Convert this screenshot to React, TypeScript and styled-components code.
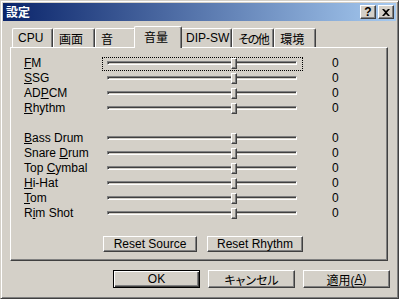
import React from "react";
import styled, { createGlobalStyle } from "styled-components";

const GlobalStyle = createGlobalStyle`
  html, body { margin: 0; padding: 0; background: #d4d0c8; }
  body {
    font-family: "Liberation Sans", "Noto Sans CJK JP", sans-serif;
    font-size: 12px;
    color: #000;
    font-feature-settings: "palt";
  }
  * { box-sizing: border-box; }
`;

const Window = styled.div`
  width: 399px;
  height: 299px;
  background: #d4d0c8;
  border: 1px solid;
  border-color: #d4d0c8 #404040 #404040 #d4d0c8;
  box-shadow: inset 1px 1px #ffffff, inset -1px -1px #808080;
  padding: 2px;
  display: flex;
  flex-direction: column;
`;

const TitleBar = styled.div`
  height: 18px;
  display: flex;
  align-items: center;
  padding: 0 2px 0 2px;
  background: linear-gradient(to right, #0a246a, #a6caf0);
`;

const TitleText = styled.div`
  flex: 1;
  color: #fff;
  font-family: "Noto Sans CJK JP", sans-serif;
  font-weight: bold;
  font-size: 12px;
  line-height: 18px;
  padding-left: 1px;
`;

const TitleButton = styled.div`
  width: 16px;
  height: 14px;
  margin-left: 2px;
  background: #d4d0c8;
  border: 1px solid;
  border-color: #ffffff #404040 #404040 #ffffff;
  box-shadow: inset -1px -1px #808080;
  display: flex;
  align-items: center;
  justify-content: center;
  font-family: "Liberation Sans", sans-serif;
  font-weight: bold;
  font-size: 12px;
  line-height: 12px;
  color: #000;
`;

const Body = styled.div`
  padding: 5px 8px 0 7px;
  display: flex;
  flex-direction: column;
`;

const TabRow = styled.div`
  height: 21px;
  display: flex;
  align-items: flex-end;
  padding-left: 2px;
`;

const Tab = styled.div<{ $active?: boolean; $w: number; $tight?: boolean }>`
  position: relative;
  flex-shrink: 0;
  z-index: ${(p) => (p.$active ? 1 : 0)};
  min-width: ${(p) => p.$w + (p.$active ? 4 : 0)}px;
  height: ${(p) => (p.$active ? 22 : 19)}px;
  margin: 0 ${(p) => (p.$active ? -2 : 0)}px ${(p) => (p.$active ? -1 : 0)}px;
  padding-left: ${(p) => (p.$active ? 9 : 5)}px;
  padding-right: ${(p) => (p.$active ? 5 : 2)}px;
  letter-spacing: ${(p) => (p.$tight ? "-1.5px" : "0")};
  background: #d4d0c8;
  border-left: 1px solid #ffffff;
  border-top: 1px solid #ffffff;
  border-right: 1px solid #404040;
  border-radius: 2px 2px 0 0;
  box-shadow: inset -1px 0 #808080;
  display: flex;
  align-items: center;
  font-family: "Liberation Sans", "Noto Sans CJK JP", sans-serif;
  font-size: 12px;
  white-space: nowrap;
  padding-bottom: ${(p) => (p.$active ? 2 : 0)}px;
`;

const Panel = styled.div`
  width: 378px;
  height: 214px;
  border: 1px solid;
  border-color: #ffffff #404040 #404040 #ffffff;
  box-shadow: inset -1px -1px #808080;
  padding: 8px 0 0 13px;
  display: flex;
  flex-direction: column;
`;

const Row = styled.div`
  height: 15px;
  display: flex;
  align-items: flex-start;
`;

const Label = styled.div`
  width: 78px;
  line-height: 15px;
  white-space: nowrap;
`;

const Key = styled.span`
  text-decoration: underline;
  text-underline-offset: 1px;
`;

const Spacer = styled.div`
  height: 15px;
`;

const SliderBox = styled.div<{ $focused?: boolean }>`
  position: relative;
  width: 201px;
  height: 14px;
  margin-top: 1px;
  outline: ${(p) => (p.$focused ? "1px dotted #000" : "none")};
  outline-offset: -1px;
`;

const Track = styled.div`
  position: absolute;
  left: 5px;
  right: 6px;
  top: 4px;
  height: 4px;
  background: #d4d0c8;
  border: 1px solid;
  border-color: #808080 #ffffff #ffffff #808080;
  box-shadow: inset 1px 1px #404040;
`;

const Thumb = styled.div`
  position: absolute;
  top: 1px;
  width: 6px;
  height: 11px;
  background: #d4d0c8;
  border: 1px solid;
  border-color: #ffffff #404040 #404040 #ffffff;
  box-shadow: inset -1px -1px #808080;
`;

const Value = styled.div`
  margin-left: 29px;
  line-height: 15px;
`;

const ResetRow = styled.div`
  display: flex;
  gap: 10px;
  margin-top: 15px;
  margin-left: 79px;
`;

const Button = styled.div<{ $w: number; $h: number; $default?: boolean }>`
  width: ${(p) => p.$w}px;
  height: ${(p) => p.$h}px;
  background: #d4d0c8;
  display: flex;
  align-items: center;
  justify-content: center;
  font-family: "Liberation Sans", "Noto Sans CJK JP", sans-serif;
  font-size: 12px;
  white-space: nowrap;
  border: 1px solid;
  border-color: ${(p) =>
    p.$default ? "#000000" : "#ffffff #404040 #404040 #ffffff"};
  box-shadow: ${(p) =>
    p.$default
      ? "inset 1px 1px #ffffff, inset -1px -1px #404040, inset -2px -2px #808080"
      : "inset -1px -1px #808080"};
`;

const ButtonRow = styled.div`
  display: flex;
  justify-content: flex-end;
  gap: 8px;
  margin-top: 9px;
  margin-right: -2px;
`;

const MIN = -100;
const MAX = 50;

function Slider({ value, focused }: { value: number; focused?: boolean }) {
  const frac = (value - MIN) / (MAX - MIN);
  const left = 5 + frac * 190 - 3;
  return (
    <SliderBox $focused={focused}>
      <Track />
      <Thumb style={{ left: `${left}px` }} />
    </SliderBox>
  );
}

type Item = { label: React.ReactNode; value: number };

const sources: Item[] = [
  { label: <><Key>F</Key>M</>, value: 0 },
  { label: <><Key>S</Key>SG</>, value: 0 },
  { label: <>AD<Key>P</Key>CM</>, value: 0 },
  { label: <><Key>R</Key>hythm</>, value: 0 },
];

const rhythms: Item[] = [
  { label: <><Key>B</Key>ass Drum</>, value: 0 },
  { label: <>Snare <Key>D</Key>rum</>, value: 0 },
  { label: <>Top <Key>C</Key>ymbal</>, value: 0 },
  { label: <><Key>H</Key>i-Hat</>, value: 0 },
  { label: <><Key>T</Key>om</>, value: 0 },
  { label: <>R<Key>i</Key>m Shot</>, value: 0 },
];

const tabs = [
  { t: "CPU", w: 41 },
  { t: "画面", w: 42 },
  { t: "音", w: 41 },
  { t: "音量", w: 44, active: true },
  { t: "DIP-SW", w: 52 },
  { t: "その他", w: 42, tight: true },
  { t: "環境", w: 42 },
];

export default function App() {
  return (
    <>
      <GlobalStyle />
      <Window>
        <TitleBar>
          <TitleText>設定</TitleText>
          <TitleButton>?</TitleButton>
          <TitleButton>
            <svg width="8" height="7" viewBox="0 0 8 7">
              <path
                d="M0 0h2l2 2 2-2h2L5 3.5 8 7H6L4 5 2 7H0l3-3.5z"
                fill="#000"
              />
            </svg>
          </TitleButton>
        </TitleBar>
        <Body>
          <TabRow>
            {tabs.map((tb) => (
              <Tab key={tb.t} $w={tb.w} $active={tb.active} $tight={tb.tight}>
                {tb.t}
              </Tab>
            ))}
          </TabRow>
          <Panel>
            {sources.map((it, i) => (
              <Row key={`s${i}`}>
                <Label>{it.label}</Label>
                <Slider value={it.value} focused={i === 0} />
                <Value>{it.value}</Value>
              </Row>
            ))}
            <Spacer />
            {rhythms.map((it, i) => (
              <Row key={`r${i}`}>
                <Label>{it.label}</Label>
                <Slider value={it.value} />
                <Value>{it.value}</Value>
              </Row>
            ))}
            <ResetRow>
              <Button $w={94} $h={16}>Reset Source</Button>
              <Button $w={96} $h={16}>Reset Rhythm</Button>
            </ResetRow>
          </Panel>
          <ButtonRow>
            <Button $w={87} $h={18} $default>OK</Button>
            <Button $w={87} $h={18}>キャンセル</Button>
            <Button $w={87} $h={18}>
              適用(<Key>A</Key>)
            </Button>
          </ButtonRow>
        </Body>
      </Window>
    </>
  );
}
